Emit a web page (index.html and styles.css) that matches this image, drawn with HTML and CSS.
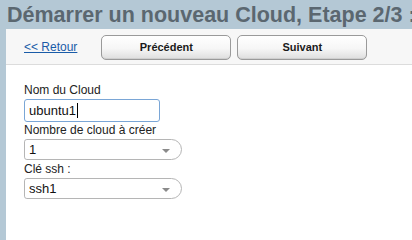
FILE: index.html
```html
<!DOCTYPE html>
<html lang="fr">
<head>
<meta charset="utf-8">
<link rel="stylesheet" href="styles.css">
</head>
<body>
<h1 class="title">Démarrer un nouveau Cloud, Etape 2/3 :</h1>
<div class="panel">
  <div class="toolbar">
    <a class="back" href="#">&lt;&lt; Retour</a>
    <button class="btn btn-prev">Précédent</button>
    <button class="btn">Suivant</button>
  </div>
  <div class="form">
    <label class="lbl">Nom du Cloud</label>
    <div class="input"><span>ubuntu1</span><span class="caret"></span></div>
    <label class="lbl">Nombre de cloud à créer</label>
    <div class="select"><span>1</span><span class="arrow"></span></div>
    <label class="lbl">Clé ssh :</label>
    <div class="select"><span>ssh1</span><span class="arrow"></span></div>
  </div>
</div>
</body>
</html>
```
FILE: styles.css
```css
html, body {
  margin: 0;
  padding: 0;
  height: 100%;
}
html {
  background: #b4c8d5;
}
body {
  width: 100%;
  min-height: 100vh;
  overflow: hidden;
  background: #b4c8d5;
  font-family: "Liberation Sans", Arial, sans-serif;
  display: flex;
  flex-direction: column;
}
.title {
  margin: 0;
  padding: 5px 0 0 7px;
  height: 29px;
  flex: none;
  box-sizing: border-box;
  font-size: 21.5px;
  line-height: 20px;
  font-weight: bold;
  color: #5b6770;
  white-space: nowrap;
}
.panel {
  margin-left: 6px;
  flex: 1;
  background: #ffffff;
  display: flex;
  flex-direction: column;
}
.toolbar {
  height: 36px;
  flex: none;
  box-sizing: border-box;
  background: #f7f7f7;
  border-bottom: 1px solid #dcdcdc;
  display: flex;
  align-items: center;
  padding: 0 0 0 18px;
}
.back {
  font-size: 12px;
  color: #1a5ca8;
  text-decoration: underline;
  margin-right: 24px;
  margin-top: 1px;
}
.btn {
  width: 130px;
  height: 25px;
  border: 1px solid #9a9a9a;
  border-radius: 5px;
  background: linear-gradient(#ffffff 0%, #f6f6f6 55%, #dedede 100%);
  box-shadow: inset 0 -1px 0 #cfcfcf;
  font-family: "Liberation Sans", Arial, sans-serif;
  font-size: 11px;
  font-weight: bold;
  color: #1a1a1a;
  padding: 0;
  margin-right: 6px;
  margin-top: 1px;
}
.form {
  padding: 18px 0 0 18px;
  display: flex;
  flex-direction: column;
  align-items: flex-start;
}
.lbl {
  font-size: 12px;
  line-height: 14px;
  color: #222222;
}
.input {
  width: 136px;
  height: 23px;
  box-sizing: border-box;
  border: 1px solid #7aa6d6;
  border-radius: 3px;
  display: flex;
  align-items: center;
  padding-left: 4px;
  font-size: 13px;
  color: #111111;
  margin: 2px 0 1px;
}
.caret {
  width: 1px;
  height: 15px;
  background: #000;
  margin-left: 1px;
}
.select {
  width: 158px;
  height: 21px;
  box-sizing: border-box;
  border: 1px solid #b5b5b5;
  border-radius: 3px 11px 11px 3px;
  display: flex;
  align-items: center;
  justify-content: space-between;
  padding: 0 11px 0 4px;
  font-size: 13px;
  color: #111111;
  margin: 2px 0 2px;
}
.arrow {
  width: 0;
  height: 0;
  border-left: 4px solid transparent;
  border-right: 4px solid transparent;
  border-top: 4px solid #8a8a8a;
  margin-top: 2px;
}
```
